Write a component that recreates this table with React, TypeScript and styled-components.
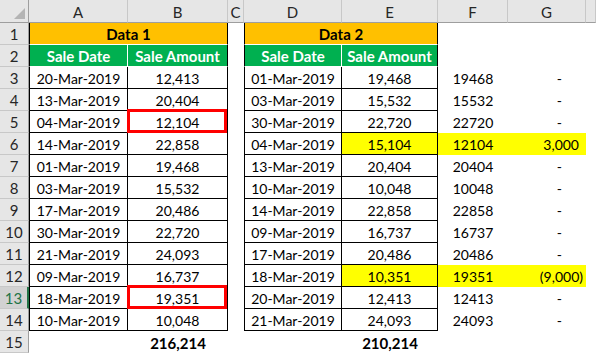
import { FC } from 'react';
import styled, { createGlobalStyle } from 'styled-components';

const COLORS = {
  ORANGE: '#FFC000',
  GREEN: '#00B050',
  YELLOW: '#FFFF00',
  RED: '#FF0000',
  HEAD_BG: '#E6E6E6',
  HEAD_LINE: '#C8C8C8',
  HEAD_EDGE: '#9E9E9E',
  EXCEL_GREEN: '#217346',
};

const GlobalStyle = createGlobalStyle`
  html, body {
    margin: 0;
    padding: 0;
    background: #fff;
    overflow: hidden;
  }
  body {
    font-family: Lato, "Open Sans", "Liberation Sans", sans-serif;
  }
`;

const Sheet = styled.div`
  display: grid;
  grid-template-columns: 29px 99px 100px 16px 98px 96px 70px 78px 1fr;
  grid-template-rows: 23px repeat(15, 22px);
  width: 596px;
  height: 353px;
  font-size: 14px;
  color: #000;
`;

const Corner = styled.div`
  background: ${COLORS.HEAD_BG};
  border-right: 1px solid ${COLORS.HEAD_EDGE};
  border-bottom: 1px solid ${COLORS.HEAD_EDGE};
  box-sizing: border-box;
  display: flex;
  align-items: flex-end;
  justify-content: flex-end;
  padding: 0 3px 3px 0;
`;

const ColHead = styled.div`
  background: ${COLORS.HEAD_BG};
  border-right: 1px solid ${COLORS.HEAD_LINE};
  border-bottom: 1px solid ${COLORS.HEAD_EDGE};
  box-sizing: border-box;
  display: flex;
  align-items: center;
  justify-content: center;
  font-size: 15px;
  color: #262626;
  padding-top: 1px;
`;

const RowHead = styled.div<{ $selected?: boolean }>`
  background: ${p => (p.$selected ? '#D2D2D2' : COLORS.HEAD_BG)};
  border-bottom: 1px solid ${COLORS.HEAD_LINE};
  border-right: ${p => (p.$selected ? `2px solid ${COLORS.EXCEL_GREEN}` : `1px solid ${COLORS.HEAD_EDGE}`)};
  box-sizing: border-box;
  display: flex;
  align-items: center;
  justify-content: center;
  font-size: 15px;
  color: ${p => (p.$selected ? COLORS.EXCEL_GREEN : '#262626')};
  padding-top: 1px;
`;

type Align = 'center' | 'right';

interface CellProps {
  $bg?: string;
  $bold?: boolean;
  $color?: string;
  $align?: Align;
  $pad?: number;
  $span?: number;
  $l?: string;
  $r?: string;
  $b?: string;
  $marked?: boolean;
}

const Cell = styled.div<CellProps>`
  position: relative;
  box-sizing: border-box;
  display: flex;
  align-items: center;
  justify-content: ${p => (p.$align === 'right' ? 'flex-end' : 'center')};
  padding: 1px ${p => p.$pad ?? 0}px 0 0;
  grid-column: span ${p => p.$span ?? 1};
  background: ${p => p.$bg ?? 'transparent'};
  color: ${p => p.$color ?? '#000'};
  font-weight: ${p => (p.$bold ? 700 : 400)};
  font-size: ${p => (p.$bold ? 15 : 14)}px;
  white-space: nowrap;
  border-left: ${p => (p.$l ? `1px solid ${p.$l}` : 'none')};
  border-right: ${p => (p.$r ? `1px solid ${p.$r}` : 'none')};
  border-bottom: ${p => (p.$b ? `1px solid ${p.$b}` : 'none')};

  ${p =>
    p.$marked &&
    `
    &::after {
      content: '';
      position: absolute;
      left: -1px;
      top: -2px;
      right: 0;
      bottom: -1px;
      border: 3px solid ${COLORS.RED};
      box-sizing: border-box;
    }
  `}
`;

const CornerMark: FC = () => (
  <svg width="11" height="11" viewBox="0 0 11 11">
    <polygon points="11,0 11,11 0,11" fill="#B4B4B4" />
  </svg>
);

const left = [
  ['20-Mar-2019', '12,413'],
  ['13-Mar-2019', '20,404'],
  ['04-Mar-2019', '12,104'],
  ['14-Mar-2019', '22,858'],
  ['01-Mar-2019', '19,468'],
  ['03-Mar-2019', '15,532'],
  ['17-Mar-2019', '20,486'],
  ['30-Mar-2019', '22,720'],
  ['21-Mar-2019', '24,093'],
  ['09-Mar-2019', '16,737'],
  ['18-Mar-2019', '19,351'],
  ['10-Mar-2019', '10,048'],
];

const right = [
  ['01-Mar-2019', '19,468', '19468', '-'],
  ['03-Mar-2019', '15,532', '15532', '-'],
  ['30-Mar-2019', '22,720', '22720', '-'],
  ['04-Mar-2019', '15,104', '12104', '3,000'],
  ['13-Mar-2019', '20,404', '20404', '-'],
  ['10-Mar-2019', '10,048', '10048', '-'],
  ['14-Mar-2019', '22,858', '22858', '-'],
  ['09-Mar-2019', '16,737', '16737', '-'],
  ['17-Mar-2019', '20,486', '20486', '-'],
  ['18-Mar-2019', '10,351', '19351', '(9,000)'],
  ['20-Mar-2019', '12,413', '12413', '-'],
  ['21-Mar-2019', '24,093', '24093', '-'],
];

const markedRows = [5, 13];
const B = '#000';
const W = '#fff';

// accounting format: numbers leave room for ")", dashes sit further in
const gPad = (v: string) => (v === '-' ? 24 : v.startsWith('(') ? 3 : 7);

const App: FC = () => {
  const cols = ['A', 'B', 'C', 'D', 'E', 'F', 'G', ''];

  return (
    <>
      <GlobalStyle />
      <Sheet>
        <Corner><CornerMark /></Corner>
        {cols.map((c, i) => <ColHead key={i}>{c}</ColHead>)}

        <RowHead>1</RowHead>
        <Cell $span={2} $bg={COLORS.ORANGE} $bold $l={B} $r={B} $b={W}>Data 1</Cell>
        <Cell />
        <Cell $span={2} $bg={COLORS.ORANGE} $bold $l={B} $r={B} $b={W}>Data 2</Cell>
        <Cell /><Cell /><Cell />

        <RowHead>2</RowHead>
        <Cell $bg={COLORS.GREEN} $color="#fff" $bold $l={B} $r={W} $b={W}>Sale Date</Cell>
        <Cell $bg={COLORS.GREEN} $color="#fff" $bold $r={B} $b={W}>Sale Amount</Cell>
        <Cell />
        <Cell $bg={COLORS.GREEN} $color="#fff" $bold $l={B} $r={W} $b={W}>Sale Date</Cell>
        <Cell $bg={COLORS.GREEN} $color="#fff" $bold $r={B} $b={W}>Sale Amount</Cell>
        <Cell /><Cell /><Cell />

        {left.map((row, i) => {
          const n = i + 3;
          const r = right[i];
          const yellow = r[3] !== '-' ? COLORS.YELLOW : undefined;
          return [
            <RowHead key={`h${n}`} $selected={n === 13}>{n}</RowHead>,
            <Cell key={`a${n}`} $l={B} $r={B} $b={B}>{row[0]}</Cell>,
            <Cell key={`b${n}`} $r={B} $b={B} $marked={markedRows.includes(n)}>{row[1]}</Cell>,
            <Cell key={`c${n}`} />,
            <Cell key={`d${n}`} $l={B} $r={B} $b={B}>{r[0]}</Cell>,
            <Cell key={`e${n}`} $r={B} $b={B} $bg={yellow}>{r[1]}</Cell>,
            <Cell key={`f${n}`} $bg={yellow}>{r[2]}</Cell>,
            <Cell key={`g${n}`} $bg={yellow} $align="right" $pad={gPad(r[3])}>{r[3]}</Cell>,
            <Cell key={`x${n}`} />,
          ];
        })}

        <RowHead>15</RowHead>
        <Cell />
        <Cell $bold>216,214</Cell>
        <Cell /><Cell />
        <Cell $bold>210,214</Cell>
        <Cell /><Cell /><Cell />
      </Sheet>
    </>
  );
};

export default App;
